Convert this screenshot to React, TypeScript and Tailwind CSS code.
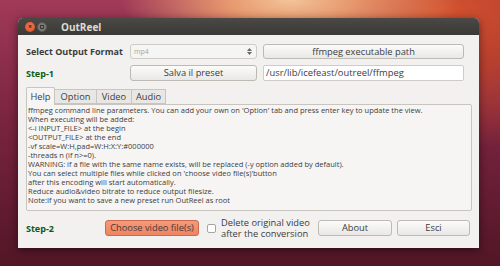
import React from "react";

const font = "font-['Open_Sans','Noto_Sans',sans-serif]";

function Btn({ children, className = "" }: { children: React.ReactNode; className?: string }) {
  return (
    <div
      className={`flex items-center justify-center rounded-[3px] border border-[#bdbab4] bg-gradient-to-b from-[#fbfbfa] to-[#e9e8e6] text-[#3c3c3c] text-[9.3px] leading-none ${className}`}
    >
      {children}
    </div>
  );
}

export default function App() {
  const helpLines = [
    "ffmpeg command line parameters. You can add your own on 'Option' tab and press enter key to update the view.",
    "When executing will be added:",
    "<-i INPUT_FILE> at the begin",
    "<OUTPUT_FILE> at the end",
    "-vf scale=W:H,pad=W:H:X:Y:#000000",
    "-threads n (if n>=0).",
    "WARNING: if a file with the same name exists, will be replaced (-y option added by default).",
    "You can select multiple files while clicked on 'choose video file(s)'button",
    "after this encoding will start automatically.",
    "Reduce audio&video bitrate to reduce output filesize.",
    "Note:If you want to save a new preset run OutReel as root",
  ];
  return (
    <div
      className={`w-[500px] h-[266px] overflow-hidden pl-[18px] pt-[18px] ${font} bg-[radial-gradient(ellipse_170px_60px_at_290px_0px,#f2c498_0%,#e89a70_35%,transparent_100%),radial-gradient(ellipse_260px_140px_at_440px_10px,#d4522e_0%,#b8402e_40%,transparent_100%),linear-gradient(180deg,#a03a58_0%,#7a2440_45%,#521626_100%)]`}
    >
      <div className="w-[461px] h-[230px] flex flex-col rounded-t-[5px] shadow-[0_2px_8px_rgba(0,0,0,0.5)] bg-[#f2f1f0] overflow-hidden">
        {/* title bar */}
        <div className="h-[17px] flex items-center bg-gradient-to-b from-[#4a4945] to-[#3a3935] pl-[7px] shrink-0">
          <div className="w-[10px] h-[10px] rounded-full bg-[radial-gradient(circle_at_50%_40%,#f47a52,#d9481e)] flex items-center justify-center text-[#3a1a10] text-[7px] leading-none font-bold">
            ×
          </div>
          <div className="ml-[2px] w-[10px] h-[10px] rounded-full bg-[#7a7873] border border-[#5a5955] flex items-center justify-center">
            <div className="w-[4px] h-[4px] border border-[#3c3b37]" />
          </div>
          <div className="ml-[14px] text-[10px] font-bold text-[#dfdbd2] leading-none">OutReel</div>
        </div>
        {/* body */}
        <div className="flex flex-col pl-[8px] pr-[7px] pt-[9px]">
          <div className="flex items-center h-[15px]">
            <div className="w-[104px] text-[9px] font-bold text-[#3c3c3c] leading-none whitespace-nowrap">
              Select Output Format
            </div>
            <div className="w-[127px] h-[15px] rounded-[3px] border border-[#cfccc7] bg-[#f5f5f4] flex items-center justify-between pl-[3px] pr-[4px]">
              <span className="text-[7px] text-[#a8a6a2] leading-none">mp4</span>
              <div className="flex flex-col items-center gap-[1px]">
                <svg width="5" height="3" viewBox="0 0 5 3"><path d="M0 3 L2.5 0 L5 3Z" fill="#6a6864" /></svg>
                <svg width="5" height="3" viewBox="0 0 5 3"><path d="M0 0 L2.5 3 L5 0Z" fill="#6a6864" /></svg>
              </div>
            </div>
            <Btn className="ml-[6px] w-[201px] h-[15px]">ffmpeg executable path</Btn>
          </div>
          <div className="flex items-center h-[16px] mt-[6px]">
            <div className="w-[104px] text-[9px] font-bold text-[#0e5b12] leading-none">Step-1</div>
            <Btn className="w-[127px] h-[16px]">Salva il preset</Btn>
            <div className="ml-[6px] w-[201px] h-[16px] border border-[#cfccc7] bg-white rounded-[2px] flex items-center pl-[2px] text-[9.4px] text-[#3c3c3c] leading-none">
              /usr/lib/icefeast/outreel/ffmpeg
            </div>
          </div>
          {/* tabs */}
          <div className="flex items-end mt-[6px] h-[17px]">
            <div className="w-[29px] h-[18px] -mb-px border border-[#c8c5c0] border-b-0 rounded-t-[2px] bg-[#f6f5f4] flex items-center justify-center text-[9.3px] text-[#3c3c3c] leading-none relative z-10">
              Help
            </div>
            <div className="w-[42px] h-[15px] border border-[#c8c5c0] border-l-0 bg-[#e9e7e4] flex items-center justify-center text-[9.3px] text-[#3c3c3c] leading-none">
              Option
            </div>
            <div className="w-[35px] h-[15px] border border-[#c8c5c0] border-l-0 bg-[#e9e7e4] flex items-center justify-center text-[9.3px] text-[#3c3c3c] leading-none">
              Video
            </div>
            <div className="w-[34px] h-[15px] border border-[#c8c5c0] border-l-0 bg-[#e9e7e4] flex items-center justify-center text-[9.3px] text-[#3c3c3c] leading-none">
              Audio
            </div>
          </div>
          <div className="w-[446px] h-[107px] border border-[#c8c5c0] rounded-b-[2px] rounded-tr-[2px] bg-[#f6f5f4] pl-[1px] pt-[1px] text-[7.5px] leading-[9px] text-[#3c3c3c]">
            {helpLines.map((l, i) => (
              <div key={i} className="whitespace-pre">{l}</div>
            ))}
          </div>
          {/* bottom row */}
          <div className="flex items-center mt-[9px] h-[16px]">
            <div className="w-[79px] text-[9px] font-bold text-[#0e5b12] leading-none">Step-2</div>
            <div className="w-[94px] h-[16px] rounded-[3px] border border-[#c96a4c] bg-gradient-to-b from-[#f49a7a] to-[#ee8462] flex items-center justify-center text-[9.3px] text-[#4a3a36] leading-none">
              Choose video file(s)
            </div>
            <div className="ml-[8px] w-[9px] h-[9px] border border-[#a8a5a0] rounded-[2px] bg-white" />
            <div className="ml-[5px] w-[90px] text-[9.3px] leading-[11px] text-[#3c3c3c] whitespace-nowrap">
              <div>Delete original video</div>
              <div>after the conversion</div>
            </div>
            <Btn className="ml-[7px] w-[74px] h-[16px]">About</Btn>
            <Btn className="ml-[5px] w-[73px] h-[16px]">Esci</Btn>
          </div>
        </div>
      </div>
    </div>
  );
}
